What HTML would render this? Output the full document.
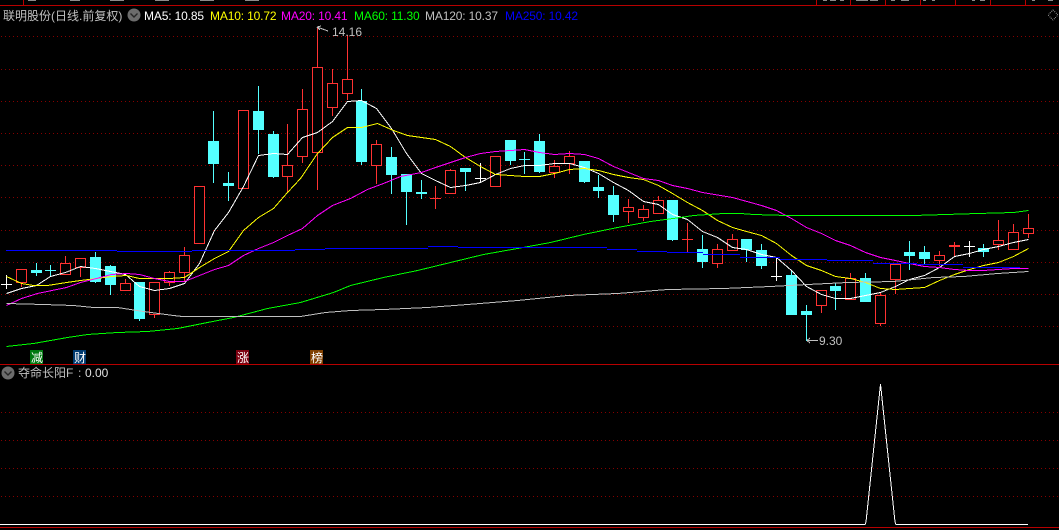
<!DOCTYPE html>
<html><head><meta charset="utf-8"><style>
html,body{margin:0;padding:0;background:#000;width:1059px;height:530px;overflow:hidden}
svg{display:block}
text{font-family:"Liberation Sans","Noto Sans CJK SC",sans-serif;font-size:12px}
.m{letter-spacing:-.15px}
.g{stroke:#860000;stroke-width:1;stroke-dasharray:1 3;fill:none}
.l{fill:none;stroke-width:1}
.r{fill:#000;stroke:#ff3232;stroke-width:1}
.c{fill:#54ffff}
</style></head><body>
<svg width="1059" height="530" viewBox="0 0 1059 530" xmlns="http://www.w3.org/2000/svg">
<rect width="1059" height="530" fill="#000"/>
<g shape-rendering="crispEdges">
<path fill="#8c8c8c" d="M28 0h8v1h-8zM70 0h10v1h-10zM110 0h14v1h-14zM155 0h14v1h-14zM200 0h14v1h-14zM245 0h14v1h-14zM823 0h4v1h-4zM830 0h6v1h-6zM840 0h4v1h-4zM856 0h12v1h-12zM870 0h8v1h-8zM891 0h4v1h-4zM901 0h8v1h-8zM923 0h3v1h-3zM932 0h3v1h-3zM972 0h3v1h-3zM980 0h5v1h-5zM1032 0h3v1h-3zM1048 0h5v1h-5z"/>
<path fill="none" stroke="#b80000" d="M0 5.5H1059M23.5 0V5M816.5 0V5M850.5 0V5M885.5 0V5M920.5 0V5M955.5 0V5M990.5 0V5M1025.5 0V5M0 364.5H1059M0 527.5H1059"/>
<path class="g" d="M1 36.5H1059M1 69.5H1059M1 101.5H1059M1 133.5H1059M1 165.5H1059M1 197.5H1059M1 230.5H1059M1 262.5H1059M1 294.5H1059M1 326.5H1059M1 412.5H1059M1 440.5H1059M1 468.5H1059M1 496.5H1059"/>

<!-- red wicks -->
<path fill="none" stroke="#ff3232" d="M21.5 269V287M65.5 256V274M80.5 258V277M125.5 279V290M154.5 282V318M169.5 271V286M184.5 247V282M287.5 124V192M302.5 89V163M317.5 28V190M332.5 69V116M347.5 35V100M376.5 140V184M450.5 169V194M554.5 160V178M569.5 151V174M628.5 199V223M643.5 205V221M658.5 196V213M717.5 244V268M732.5 234V251M821.5 290V313M850.5 273V300M880.5 292V326M895.5 264V294M939.5 251V266M998.5 220V250M1013.5 224V249M1028.5 214V238M435.5 186V209M430 198.5H441M687.5 223V253M682 239.5H693M954.5 242V256M949 245.5H960M949 246.5H960"/>
<!-- red bodies -->
<g class="r">
<rect x="16.5" y="269.5" width="10" height="13"/><rect x="60.5" y="263.5" width="10" height="11"/><rect x="75.5" y="258.5" width="10" height="9"/><rect x="120.5" y="283.5" width="10" height="7"/><rect x="149.5" y="282.5" width="10" height="32"/><rect x="164.5" y="272.5" width="10" height="10"/><rect x="179.5" y="255.5" width="10" height="17"/><rect x="194.5" y="186.5" width="10" height="57"/><rect x="238.5" y="110.5" width="10" height="78"/><rect x="282.5" y="165.5" width="10" height="11"/><rect x="297.5" y="109.5" width="10" height="47"/><rect x="312.5" y="67.5" width="10" height="85"/><rect x="327.5" y="83.5" width="10" height="24"/><rect x="342.5" y="79.5" width="10" height="14"/><rect x="371.5" y="144.5" width="10" height="21"/><rect x="445.5" y="170.5" width="10" height="23"/><rect x="490.5" y="156.5" width="10" height="30"/><rect x="549.5" y="166.5" width="10" height="6"/><rect x="564.5" y="156.5" width="10" height="7"/><rect x="623.5" y="207.5" width="10" height="4"/><rect x="638.5" y="209.5" width="10" height="8"/><rect x="653.5" y="200.5" width="10" height="13"/><rect x="712.5" y="249.5" width="10" height="14"/><rect x="727.5" y="239.5" width="10" height="11"/><rect x="816.5" y="290.5" width="10" height="15"/><rect x="845.5" y="278.5" width="10" height="21"/><rect x="875.5" y="295.5" width="10" height="28"/><rect x="890.5" y="264.5" width="10" height="15"/><rect x="934.5" y="255.5" width="10" height="5"/><rect x="993.5" y="240.5" width="10" height="4"/><rect x="1008.5" y="232.5" width="10" height="17"/><rect x="1023.5" y="228.5" width="10" height="5"/>
</g>
<!-- white crosses -->
<path fill="none" stroke="#fff" d="M6.5 275V289M1 284.5H12M480.5 163V182M475 178.5H486M776.5 257V281M771 276.5H782M969.5 241V257M964 246.5H975"/>
<!-- cyan wicks -->
<path fill="none" stroke="#54ffff" d="M36.5 263V276M50.5 265V276M95.5 252V283M110.5 265V295M139.5 282V321M213.5 111V183M228.5 172V201M258.5 86V154M273.5 131V178M361.5 89V165M391.5 147V194M406.5 174V225M421.5 180V199M465.5 168V191M510.5 140V165M524.5 152V174M539.5 134V173M584.5 161V183M598.5 175V198M613.5 186V222M672.5 200V241M702.5 235V268M746.5 239V262M761.5 244V269M791.5 271V315M806.5 305V341M835.5 283V310M865.5 273V302M909.5 241V270M924.5 246V264M983.5 244V257"/>
<!-- cyan bodies -->
<g class="c">
<rect x="31" y="270" width="11" height="3"/><rect x="45" y="270" width="11" height="1"/><rect x="90" y="257" width="11" height="25"/><rect x="105" y="266" width="11" height="19"/><rect x="134" y="282" width="11" height="37"/><rect x="208" y="141" width="11" height="23"/><rect x="223" y="183" width="11" height="3"/><rect x="253" y="111" width="11" height="19"/><rect x="268" y="134" width="11" height="43"/><rect x="356" y="101" width="11" height="61"/><rect x="386" y="157" width="11" height="18"/><rect x="401" y="174" width="11" height="18"/><rect x="416" y="192" width="11" height="2"/><rect x="460" y="168" width="11" height="4"/><rect x="505" y="140" width="11" height="21"/><rect x="519" y="159" width="11" height="1"/><rect x="534" y="141" width="11" height="31"/><rect x="579" y="161" width="11" height="21"/><rect x="593" y="187" width="11" height="4"/><rect x="608" y="195" width="11" height="20"/><rect x="667" y="200" width="11" height="40"/><rect x="697" y="249" width="11" height="13"/><rect x="741" y="239" width="11" height="11"/><rect x="756" y="250" width="11" height="16"/><rect x="786" y="275" width="11" height="40"/><rect x="801" y="311" width="11" height="4"/><rect x="830" y="286" width="11" height="5"/><rect x="860" y="278" width="11" height="24"/><rect x="904" y="252" width="11" height="4"/><rect x="919" y="252" width="11" height="7"/><rect x="978" y="248" width="11" height="4"/>
</g>

<!-- MA lines -->
<g transform="translate(.5 .5)">
<polyline class="l" stroke="#fff" points="6,293 21,288 36,285 50,276 65,272 80,266 95,268 110,271 125,274 139,286 154,290 169,288 184,283 199,263 214,230 228,212 243,186 258,155 273,153 287,154 302,137 317,132 332,121 347,101 361,100 376,108 391,128 406,153 421,173 435,180 450,187 465,185 480,182 495,174 510,168 524,165 539,165 554,163 569,163 584,167 598,173 613,182 628,190 643,201 658,204 672,214 687,219 702,231 717,237 732,247 746,249 761,254 776,257 791,270 806,286 821,294 835,298 850,298 865,295 880,292 895,286 909,279 924,275 939,267 954,256 969,253 983,249 998,246 1013,242 1028,239"/>
<polyline class="l" stroke="#ffff00" points="6,276 21,283 33,285 47,285 66,282 80,280 96,278 111,276 126,275 139,278 154,278 169,278 184,277 199,267 214,258 228,251 243,230 258,217 273,208 287,192 300,178 317,153 332,137 347,127 361,127 377,123 393,130 407,135 421,137 435,139 450,146 465,157 480,166 495,174 510,175 524,176 539,176 554,173 569,169 584,168 598,170 613,174 628,177 643,179 658,185 672,193 687,202 702,210 717,220 732,227 746,231 761,235 776,243 791,255 806,265 821,270 835,276 850,278 865,282 880,288 895,289 909,288 924,287 939,280 954,274 969,269 983,265 998,262 1013,256 1028,248"/>
<polyline class="l" stroke="#ff00ff" points="6,305 21,298 37,293 66,287 80,282 96,278 111,274 126,273 139,274 154,278 169,281 184,281 199,275 214,269 228,265 243,255 258,248 273,242 287,235 302,228 317,215 332,205 350,198 367,189 383,183 400,176 421,172 435,167 450,162 465,157 480,153 495,151 510,150 524,149 539,152 554,154 569,153 584,154 598,158 613,166 628,172 643,178 658,180 672,185 687,188 702,192 732,197 761,205 776,210 791,218 806,227 821,233 835,240 850,245 865,252 880,257 895,260 909,263 924,266 939,267 954,269 969,270 983,270 1013,268 1028,268"/>
<polyline class="l" stroke="#00ff00" points="6,346 33,343 67,337 87,334 117,332 147,331 177,328 207,322 233,317 267,308 300,302 333,292 350,285 383,277 417,270 450,262 483,254 517,248 550,242 583,234 617,227 650,221 680,217 693,215 723,213 740,213 753,214 787,215 913,215 977,213 1013,212 1028,210"/>
<polyline class="l" stroke="#c0c0c0" points="6,303 43,304 73,305 93,307 117,307 143,311 173,315 182,316 233,316 300,316 325,312 350,310 383,309 427,307 467,304 517,300 567,295 617,293 667,289 723,288 770,286 807,284 847,282 893,281 933,277 963,276 997,273 1028,271"/>
</g>
<path fill="#0000ff" d="M6 250h111v1H6zM117 251h75v1h-75zM192 250h41v1h-41zM233 250h62v1h-62zM295 249h30v1h-30zM325 248h103v1H325zM428 246h30v1h-30zM458 247h119v1H458zM577 247h30v1h-30zM607 249h30v1h-30zM637 251h30v1h-30zM667 252h36v1h-36zM703 254h37v1h-37zM740 257h40v1h-40zM780 259h47v1h-47zM827 260h46v1h-46zM873 263h44v1h-44zM917 264h46v1h-46zM963 267h57v1h-57z"/>

<!-- lower indicator -->
<polyline class="l" stroke="#fff" points="0,524.5 865,524.5 866,522 880.5,384 895,522 896,524.5 1028,524.5"/>

<!-- signal boxes -->
<rect x="30" y="350" width="13" height="14" fill="#007a10"/>
<rect x="73" y="350" width="13" height="14" fill="#003a70"/>
<rect x="236" y="350" width="13" height="14" fill="#7c0010"/>
<rect x="310" y="350" width="13" height="14" fill="#804000"/>

<!-- markers -->
<path fill="none" stroke="#c0c0c0" d="M317 27L328 31M317 27L321 26M317 27L320 30M807 340.5H818M807 340.5L810 338M807 340.5L810 343"/>
<path fill="none" stroke="#808080" stroke-dasharray="1 1" d="M1053 10L1058 15L1053 20L1048 15Z"/>
</g>

<circle cx="134" cy="15" r="6.5" fill="#6c6c6c"/>
<path d="M130.5 13.5L134 17L137.5 13.5" fill="none" stroke="#262626" stroke-width="1.4"/>
<circle cx="8" cy="373" r="6.5" fill="#6c6c6c"/>
<path d="M4.5 371.5L8 375L11.5 371.5" fill="none" stroke="#262626" stroke-width="1.4"/>

<text x="3" y="20" fill="#c0c0c0">联明股份(日线.前复权)</text>
<text class="m" x="144" y="20" fill="#fff">MA5: 10.85</text>
<text class="m" x="210" y="20" fill="#ffff00">MA10: 10.72</text>
<text class="m" x="281" y="20" fill="#ff00ff">MA20: 10.41</text>
<text class="m" x="354" y="20" fill="#00ff00">MA60: 11.30</text>
<text class="m" x="425" y="20" fill="#c0c0c0">MA120: 10.37</text>
<text class="m" x="505" y="20" fill="#0000ff">MA250: 10.42</text>
<text x="332" y="36" fill="#c0c0c0">14.16</text>
<text x="819" y="345" fill="#c0c0c0">9.30</text>
<text x="31" y="362" fill="#fff">减</text>
<text x="74" y="362" fill="#fff">财</text>
<text x="237" y="362" fill="#fff">涨</text>
<text x="311" y="362" fill="#fff">榜</text>
<text x="18" y="377" fill="#c0c0c0">夺命长阳F</text>
<text x="78" y="377" fill="#c0c0c0">:</text>
<text x="85" y="377" fill="#e0e0e0">0.00</text>
</svg>
</body></html>
